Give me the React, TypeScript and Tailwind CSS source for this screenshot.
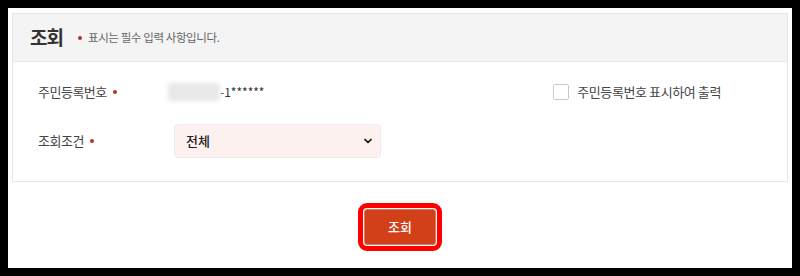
import { ChevronDown } from "lucide-react";

const font = { fontFamily: '"Noto Sans CJK KR", "Noto Sans", sans-serif' };

function Dot() {
  return <span className="ml-[6px] inline-block h-[4px] w-[4px] rounded-full bg-[#b8322a]" />;
}

export default function App() {
  return (
    <div className="h-[276px] w-[800px] bg-black p-2" style={font}>
      <div className="flex h-full flex-col bg-white px-1 pt-[5px]">
        <div className="border border-[#e6e6e6]">
          <div className="flex h-[48px] items-center border-b border-[#e6e6e6] bg-[#f4f4f4] pl-[17px]">
            <span className="text-[19px] font-bold tracking-[-1px] text-[#333]">조회</span>
            <span className="ml-[15px] mr-[6px] inline-block h-[4px] w-[4px] rounded-full bg-[#b8322a]" />
            <span className="text-[11.5px] tracking-[-0.4px] text-[#666]">표시는 필수 입력 사항입니다.</span>
          </div>
          <div className="flex h-[119px] flex-col pl-[25px] pr-[66px] pt-[14px]">
            <div className="flex h-[32px] items-center">
              <div className="flex w-[130px] items-center text-[13px] tracking-[-0.5px] text-[#444]">
                주민등록번호
                <Dot />
              </div>
              <div className="flex items-center">
                <span className="h-[18px] w-[52px] rounded-[4px] bg-[#e8e8e8] blur-[2px]" />
                <span className="text-[12px] text-[#333]">-1******</span>
              </div>
              <label className="ml-auto flex items-center gap-[8px] text-[13px] tracking-[-0.4px] text-[#444]">
                <span className="h-[16px] w-[16px] rounded-[2px] border border-[#c9c9c9] bg-white" />
                주민등록번호 표시하여 출력
              </label>
            </div>
            <div className="mt-[16px] flex h-[34px] items-center">
              <div className="flex w-[136px] items-center text-[13px] tracking-[-0.5px] text-[#444]">
                조회조건
                <Dot />
              </div>
              <div className="flex h-[34px] w-[207px] items-center justify-between rounded-[4px] border border-[#ececec] bg-[#fcf1ef] pl-[11px] pr-[6px]">
                <span className="text-[13px] font-medium text-[#222]">전체</span>
                <ChevronDown className="h-[12px] w-[12px] text-[#111]" strokeWidth={3.5} />
              </div>
            </div>
          </div>
        </div>
        <div className="mt-[21px] flex justify-center">
          <div className="rounded-[9px] border-[5px] border-[#ff0000] p-[1px]">
            <button className="flex h-[36px] w-[72px] items-center justify-center rounded-[3px] border border-[#e0775a] bg-[#d2401a] text-[13px] font-medium text-white">
              조회
            </button>
          </div>
        </div>
      </div>
    </div>
  );
}
